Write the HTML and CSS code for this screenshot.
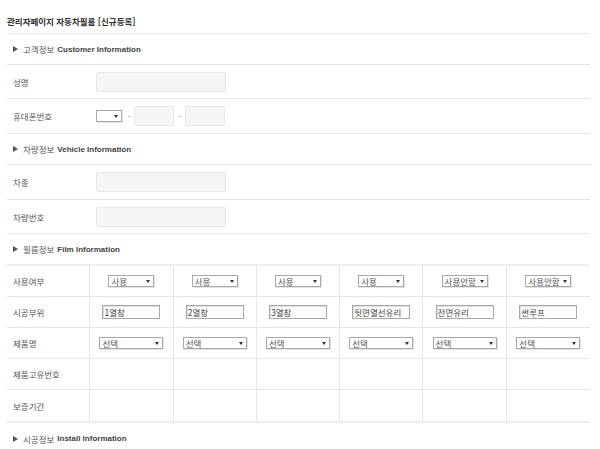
FILE: index.html
```html
<!DOCTYPE html>
<html lang="ko">
<head>
<meta charset="utf-8">
<title>관리자페이지 자동차필름 [신규등록]</title>
<link rel="stylesheet" href="styles.css">
</head>
<body>
<div class="page">
  <div class="title">관리자페이지 자동차필름 [신규등록]</div>

  <div class="sec"><span class="tri"></span>고객정보 <span class="en">Customer Information</span></div>
  <div class="row h33">
    <div class="lab">성명</div>
    <div class="inp w130"></div>
  </div>
  <div class="row h34">
    <div class="lab">휴대폰번호</div>
    <div class="phone">
      <div class="sel psel"><span></span><i class="arr"></i></div>
      <span class="dash">-</span>
      <div class="inp w40"></div>
      <span class="dash">-</span>
      <div class="inp w40"></div>
    </div>
  </div>

  <div class="sec"><span class="tri"></span>차량정보 <span class="en">Vehicle Information</span></div>
  <div class="row h34">
    <div class="lab">차종</div>
    <div class="inp w130"></div>
  </div>
  <div class="row h33">
    <div class="lab">차량번호</div>
    <div class="inp w130"></div>
  </div>

  <div class="sec sec-table"><span class="tri"></span>필름정보 <span class="en">Film Information</span></div>
  <div class="grid">
    <div class="c lab">사용여부</div>
    <div class="c"><div class="sel s46"><span>사용</span><i class="arr"></i></div></div>
    <div class="c"><div class="sel s46"><span>사용</span><i class="arr"></i></div></div>
    <div class="c"><div class="sel s46"><span>사용</span><i class="arr"></i></div></div>
    <div class="c"><div class="sel s46"><span>사용</span><i class="arr"></i></div></div>
    <div class="c"><div class="sel s46"><span>사용안함</span><i class="arr"></i></div></div>
    <div class="c last"><div class="sel s46"><span>사용안함</span><i class="arr"></i></div></div>

    <div class="c lab">시공부위</div>
    <div class="c"><div class="txt">1열창</div></div>
    <div class="c"><div class="txt">2열창</div></div>
    <div class="c"><div class="txt">3열창</div></div>
    <div class="c"><div class="txt">뒷면열선유리</div></div>
    <div class="c"><div class="txt">전면유리</div></div>
    <div class="c last"><div class="txt">썬루프</div></div>

    <div class="c lab">제품명</div>
    <div class="c"><div class="sel s64"><span>선택</span><i class="arr"></i></div></div>
    <div class="c"><div class="sel s64"><span>선택</span><i class="arr"></i></div></div>
    <div class="c"><div class="sel s64"><span>선택</span><i class="arr"></i></div></div>
    <div class="c"><div class="sel s64"><span>선택</span><i class="arr"></i></div></div>
    <div class="c"><div class="sel s64"><span>선택</span><i class="arr"></i></div></div>
    <div class="c last"><div class="sel s64"><span>선택</span><i class="arr"></i></div></div>

    <div class="c lab">제품고유번호</div>
    <div class="c"></div><div class="c"></div><div class="c"></div><div class="c"></div><div class="c"></div><div class="c last"></div>

    <div class="c lab">보증기간</div>
    <div class="c"></div><div class="c"></div><div class="c"></div><div class="c"></div><div class="c"></div><div class="c last"></div>
  </div>

  <div class="sec nob"><span class="tri"></span>시공정보 <span class="en">Install Information</span></div>
</div>
</body>
</html>
```
FILE: styles.css
```css
html, body {
  margin: 0;
  padding: 0;
  background: #fff;
}
body {
  font-family: "Noto Sans CJK KR", "Liberation Sans", sans-serif;
  font-size: 8.5px;
  color: #555;
}
.page {
  width: 583px;
  padding: 0 10px 0 7px;
}
.title {
  box-sizing: border-box;
  height: 34px;
  padding-top: 8px;
  display: flex;
  align-items: center;
  border-bottom: 1px solid #e6e6e6;
  font-weight: bold;
  color: #333;
}
.sec {
  box-sizing: border-box;
  height: 31px;
  padding-left: 6px;
  display: flex;
  align-items: center;
  border-bottom: 1px solid #e6e6e6;
  color: #555;
}
.sec.sec-table {
  border-bottom: 2px solid #eeeeee;
  height: 32px;
}
.sec.nob {
  border-bottom: none;
}
.en {
  font-family: "Liberation Sans", sans-serif;
  font-size: 8px;
  font-weight: bold;
  color: #444;
  margin-left: 3px;
}
.tri {
  width: 0;
  height: 0;
  border-top: 3px solid transparent;
  border-bottom: 3px solid transparent;
  border-left: 5px solid #555;
  margin-right: 5px;
}
.row {
  box-sizing: border-box;
  display: flex;
  align-items: center;
  border-bottom: 1px solid #e6e6e6;
}
.h33 { height: 34px; }
.h34 { height: 35px; }
.lab {
  box-sizing: border-box;
  width: 89px;
  padding-left: 6px;
}
.inp {
  box-sizing: border-box;
  height: 20px;
  background: #f5f5f5;
  border: 1px solid #e8e8e8;
  border-radius: 2px;
}
.w130 { width: 130px; }
.w40 { width: 40px; }
.phone {
  display: flex;
  align-items: center;
}
.dash {
  color: #888;
  width: 11px;
  text-align: center;
}
.psel {
  width: 26px;
  height: 14px;
  margin-right: 1px;
}
.sel {
  box-sizing: border-box;
  display: flex;
  align-items: center;
  justify-content: space-between;
  height: 12px;
  padding: 0 3px 0 2px;
  background: #fff;
  border: 1px solid #a9a9a9;
  box-shadow: 1px 1px 0 #e4e4e4;
  line-height: 1;
  color: #555;
}
.s46 { width: 46px; }
.s64 { width: 64px; }
.arr {
  width: 0;
  height: 0;
  border-left: 2px solid transparent;
  border-right: 2px solid transparent;
  border-top: 3px solid #333;
}
.txt {
  box-sizing: border-box;
  width: 58px;
  height: 14px;
  padding-left: 1px;
  display: flex;
  align-items: center;
  border: 1px solid #a9a9a9;
  box-shadow: inset 1px 1px 0 #e0e0e0;
  color: #444;
  line-height: 1;
}
.grid {
  display: grid;
  grid-template-columns: repeat(7, 1fr);
  grid-auto-rows: 31px;
  border-bottom: 2px solid #eeeeee;
}
.c {
  box-sizing: border-box;
  display: flex;
  align-items: center;
  justify-content: center;
  border-right: 1px solid #e6e6e6;
  border-bottom: 1px solid #e6e6e6;
}
.c.lab {
  width: auto;
  justify-content: flex-start;
}
.c.last {
  border-right: none;
}
.grid > .c:nth-last-child(-n+7) {
  border-bottom: none;
}
```
